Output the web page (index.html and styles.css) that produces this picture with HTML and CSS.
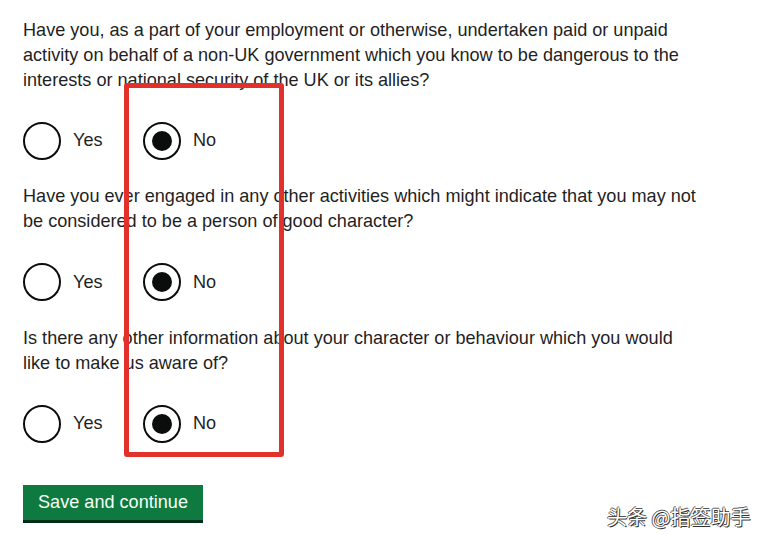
FILE: index.html
```html
<!DOCTYPE html>
<html lang="en">
<head>
<meta charset="utf-8">
<title>Character questions</title>
<link rel="stylesheet" href="styles.css">
</head>
<body>
<main class="page">
  <section class="question">
    <p class="q-text">Have you, as a part of your employment or otherwise, undertaken paid or unpaid<br>activity on behalf of a non-UK government which you know to be dangerous to the<br>interests or national security of the UK or its allies?</p>
    <div class="radios">
      <label class="radio"><span class="circle"></span><span class="lbl">Yes</span></label>
      <label class="radio"><span class="circle checked"></span><span class="lbl">No</span></label>
    </div>
  </section>
  <section class="question">
    <p class="q-text">Have you ever engaged in any other activities which might indicate that you may not<br>be considered to be a person of good character?</p>
    <div class="radios">
      <label class="radio"><span class="circle"></span><span class="lbl">Yes</span></label>
      <label class="radio"><span class="circle checked"></span><span class="lbl">No</span></label>
    </div>
  </section>
  <section class="question">
    <p class="q-text">Is there any other information about your character or behaviour which you would<br>like to make us aware of?</p>
    <div class="radios">
      <label class="radio"><span class="circle"></span><span class="lbl">Yes</span></label>
      <label class="radio"><span class="circle checked"></span><span class="lbl">No</span></label>
    </div>
  </section>
  <div class="actions">
    <button class="btn" type="button">Save and continue</button>
  </div>
  <div class="highlight"></div>
  <div class="watermark">头条 @指签助手</div>
</main>
</body>
</html>
```
FILE: styles.css
```css
html, body {
  margin: 0;
  padding: 0;
  background: #ffffff;
}
.page {
  position: relative;
  width: 766px;
  height: 543px;
  padding: 17.5px 0 0 23px;
  box-sizing: border-box;
  font-family: "Liberation Sans", Arial, sans-serif;
  color: #1f1f1f;
  overflow: hidden;
}
.question {
  margin: 0;
  padding: 0;
}
.q-text {
  margin: 0;
  padding: 0;
  font-size: 18.1px;
  line-height: 25px;
  white-space: nowrap;
  color: #1f1f1f;
}
.radios {
  display: flex;
  margin: 28px 0 23.5px;
}
.radio {
  display: flex;
  align-items: center;
  width: 120px;
  height: 40px;
}
.circle {
  width: 38px;
  height: 38px;
  box-sizing: border-box;
  border: 2.5px solid #0b0c0c;
  border-radius: 50%;
  position: relative;
  flex: none;
}
.circle.checked::after {
  content: "";
  position: absolute;
  left: 50%;
  top: 50%;
  width: 20px;
  height: 20px;
  margin: -10px 0 0 -10px;
  border-radius: 50%;
  background: #0b0c0c;
}
.lbl {
  margin-left: 12px;
  font-size: 18.1px;
  color: #1f1f1f;
}
.actions {
  margin-top: 41.5px;
}
.btn {
  display: block;
  width: 180px;
  height: 35px;
  background: #0f7a3f;
  color: #f4fff8;
  border: 0;
  box-shadow: 0 3px 0 #002d18;
  font-family: "Liberation Sans", Arial, sans-serif;
  font-size: 18.1px;
  padding: 0;
  cursor: pointer;
}
.highlight {
  position: absolute;
  left: 124px;
  top: 83px;
  width: 160px;
  height: 374px;
  box-sizing: border-box;
  border: 5px solid #e2302a;
  border-radius: 3px;
}
.watermark {
  position: absolute;
  left: 607px;
  top: 503px;
  font-family: "Noto Sans CJK SC", sans-serif;
  font-size: 20px;
  line-height: 28px;
  color: #ffffff;
  text-shadow: 1px 1px 0 #333, -1px 0 0 #555, 0 -1px 0 #555;
}
```
